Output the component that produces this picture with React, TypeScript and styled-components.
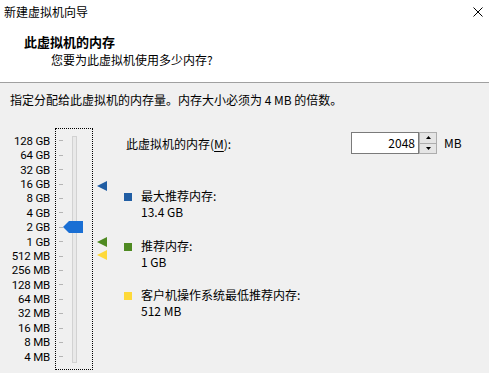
import React from 'react';
import styled, { createGlobalStyle } from 'styled-components';

const PITCH = 14.4;

const sizes = [
	'128 GB', '64 GB', '32 GB', '16 GB', '8 GB', '4 GB', '2 GB', '1 GB',
	'512 MB', '256 MB', '128 MB', '64 MB', '32 MB', '16 MB', '8 MB', '4 MB',
];

// slot = position on the scale, counted in rows from 128 GB
const markers = [
	{ slot: 3.1, color: '#215ea4' },
	{ slot: 7, color: '#4f8a22' },
	{ slot: 7.95, color: '#fed939' },
];

const legend = [
	{ color: '#215ea4', title: '最大推荐内存:', value: '13.4 GB' },
	{ color: '#4f8a22', title: '推荐内存:', value: '1 GB' },
	{ color: '#fed939', title: '客户机操作系统最低推荐内存:', value: '512 MB' },
];

const THUMB_SLOT = 6;

const GlobalStyle = createGlobalStyle`
	html, body {
		margin: 0;
		padding: 0;
	}
	body {
		background: #f0f0f0;
		font-family: "Noto Sans CJK SC", "Noto Sans", sans-serif;
		font-size: 12px;
		color: #000;
	}
`;

const Window = styled.div`
	width: 489px;
	height: 373px;
	overflow: hidden;
	display: flex;
	flex-direction: column;
	background: #f0f0f0;
`;

const Header = styled.header`
	height: 83px;
	box-sizing: border-box;
	background: #fff;
	border-bottom: 1px solid #a0a0a0;
`;

const TitleBar = styled.div`
	height: 24px;
	display: flex;
	align-items: center;
	justify-content: space-between;
	padding: 0 6px 0 4px;
	line-height: 24px;
`;

const Heading = styled.div`
	margin-top: 9px;
	padding-left: 24px;
	font-size: 13px;
	font-weight: bold;
	line-height: 18px;
`;

const SubHeading = styled.div`
	padding-left: 51px;
	line-height: 18px;
`;

const Body = styled.div`
	padding-top: 8px;
`;

const Description = styled.div`
	padding-left: 10px;
	line-height: 18px;
`;

const Main = styled.div`
	margin-top: 19px;
	display: flex;
	align-items: flex-start;
`;

const LabelColumn = styled.div`
	width: 50px;
	padding-top: 5.8px;
	display: flex;
	flex-direction: column;
`;

const ScaleLabel = styled.div`
	height: ${PITCH}px;
	line-height: ${PITCH}px;
	font-family: Roboto, "Noto Sans", sans-serif;
	font-size: 11.5px;
	letter-spacing: -0.2px;
	text-align: right;
	white-space: nowrap;
`;

const FocusBox = styled.div`
	position: relative;
	margin-left: 5px;
	width: 38px;
	height: 242px;
	box-sizing: border-box;
	border: 1px dotted #000;
	display: flex;
	align-items: flex-start;
`;

const TickColumn = styled.div`
	margin-left: 3px;
	padding-top: 4.8px;
	display: flex;
	flex-direction: column;
`;

const TickRow = styled.div`
	height: ${PITCH}px;
	display: flex;
	align-items: center;
`;

const Tick = styled.div`
	width: 4px;
	height: 1px;
	background: #b5b5b5;
`;

const Track = styled.div`
	margin-left: 9px;
	margin-top: 7px;
	width: 5px;
	height: 227px;
	box-sizing: border-box;
	border: 1px solid #d2d2d2;
	background: #e9e9e9;
`;

const Thumb = styled.svg`
	position: absolute;
	left: 7px;
`;

const MarkerColumn = styled.div`
	position: relative;
	margin-left: 4px;
	width: 11px;
	height: 242px;
`;

const Marker = styled.svg`
	position: absolute;
	left: 0;
`;

const RightPanel = styled.div`
	margin-left: 16px;
	padding-top: 4px;
	display: flex;
	flex-direction: column;
`;

const FormRow = styled.div`
	height: 22px;
	display: flex;
	align-items: center;
	padding-left: 2px;
`;

const FieldLabel = styled.label`
	width: 225px;
	line-height: 22px;
	padding-top: 2px;
	u {
		text-decoration: underline;
		text-underline-offset: 2px;
	}
`;

const NumberBox = styled.div`
	width: 68px;
	height: 22px;
	box-sizing: border-box;
	border: 1px solid #7a7a7a;
	background: #fff;
	text-align: right;
	padding-right: 3px;
	line-height: 19px;
`;

const Spin = styled.div`
	width: 18px;
	height: 22px;
	display: flex;
	flex-direction: column;
`;

const SpinButton = styled.div`
	flex: 1;
	box-sizing: border-box;
	border: 1px solid #adadad;
	background: #e5e5e5;
	display: flex;
	align-items: center;
	justify-content: center;
	& + & {
		border-top: none;
	}
`;

const Unit = styled.span`
	margin-left: 7px;
	line-height: 22px;
`;

const Legend = styled.div`
	margin-top: 34px;
	display: flex;
	flex-direction: column;
	gap: 17.5px;
`;

const LegendItem = styled.div`
	display: grid;
	grid-template-columns: 8px auto;
	column-gap: 9px;
	line-height: 16px;
`;

const Swatch = styled.div<{ $color: string }>`
	width: 8px;
	height: 8px;
	margin-top: 5px;
	background: ${(p) => p.$color};
`;

const LegendValue = styled.div`
	grid-column: 2;
`;

const App = () => {
	return (
		<Window>
			<GlobalStyle />
			<Header>
				<TitleBar>
					<span>新建虚拟机向导</span>
					<svg width='10' height='10' viewBox='0 0 10 10'>
						<path d='M0.5 0.5 L9.5 9.5 M9.5 0.5 L0.5 9.5' stroke='#000' strokeWidth='1' />
					</svg>
				</TitleBar>
				<Heading>此虚拟机的内存</Heading>
				<SubHeading>您要为此虚拟机使用多少内存?</SubHeading>
			</Header>
			<Body>
				<Description>指定分配给此虚拟机的内存量。内存大小必须为 4 MB 的倍数。</Description>
				<Main>
					<LabelColumn>
						{sizes.map((s) => (
							<ScaleLabel key={s}>{s}</ScaleLabel>
						))}
					</LabelColumn>
					<FocusBox>
						<TickColumn>
							{sizes.map((s) => (
								<TickRow key={s}>
									<Tick />
								</TickRow>
							))}
						</TickColumn>
						<Track />
						<Thumb
							width='20'
							height='12'
							viewBox='0 0 20 12'
							style={{ top: 4.8 + THUMB_SLOT * PITCH + PITCH / 2 - 6 }}
						>
							<path d='M0 6 L6 0 H20 V12 H6 Z' fill='#1a6fd4' />
						</Thumb>
					</FocusBox>
					<MarkerColumn>
						{markers.map((m) => (
							<Marker
								key={m.color}
								width='10'
								height='10'
								viewBox='0 0 10 10'
								style={{ top: 5.8 + m.slot * PITCH + PITCH / 2 - 5 }}
							>
								<path d='M0 5 L10 0 V10 Z' fill={m.color} />
							</Marker>
						))}
					</MarkerColumn>
					<RightPanel>
						<FormRow>
							<FieldLabel>
								此虚拟机的内存(<u>M</u>):
							</FieldLabel>
							<NumberBox>2048</NumberBox>
							<Spin>
								<SpinButton>
									<svg width='5' height='3' viewBox='0 0 5 3'>
										<path d='M0 3 L2.5 0 L5 3 Z' fill='#000' />
									</svg>
								</SpinButton>
								<SpinButton>
									<svg width='5' height='3' viewBox='0 0 5 3'>
										<path d='M0 0 L5 0 L2.5 3 Z' fill='#000' />
									</svg>
								</SpinButton>
							</Spin>
							<Unit>MB</Unit>
						</FormRow>
						<Legend>
							{legend.map((l) => (
								<LegendItem key={l.title}>
									<Swatch $color={l.color} />
									<div>{l.title}</div>
									<LegendValue>{l.value}</LegendValue>
								</LegendItem>
							))}
						</Legend>
					</RightPanel>
				</Main>
			</Body>
		</Window>
	);
};

export default App;
